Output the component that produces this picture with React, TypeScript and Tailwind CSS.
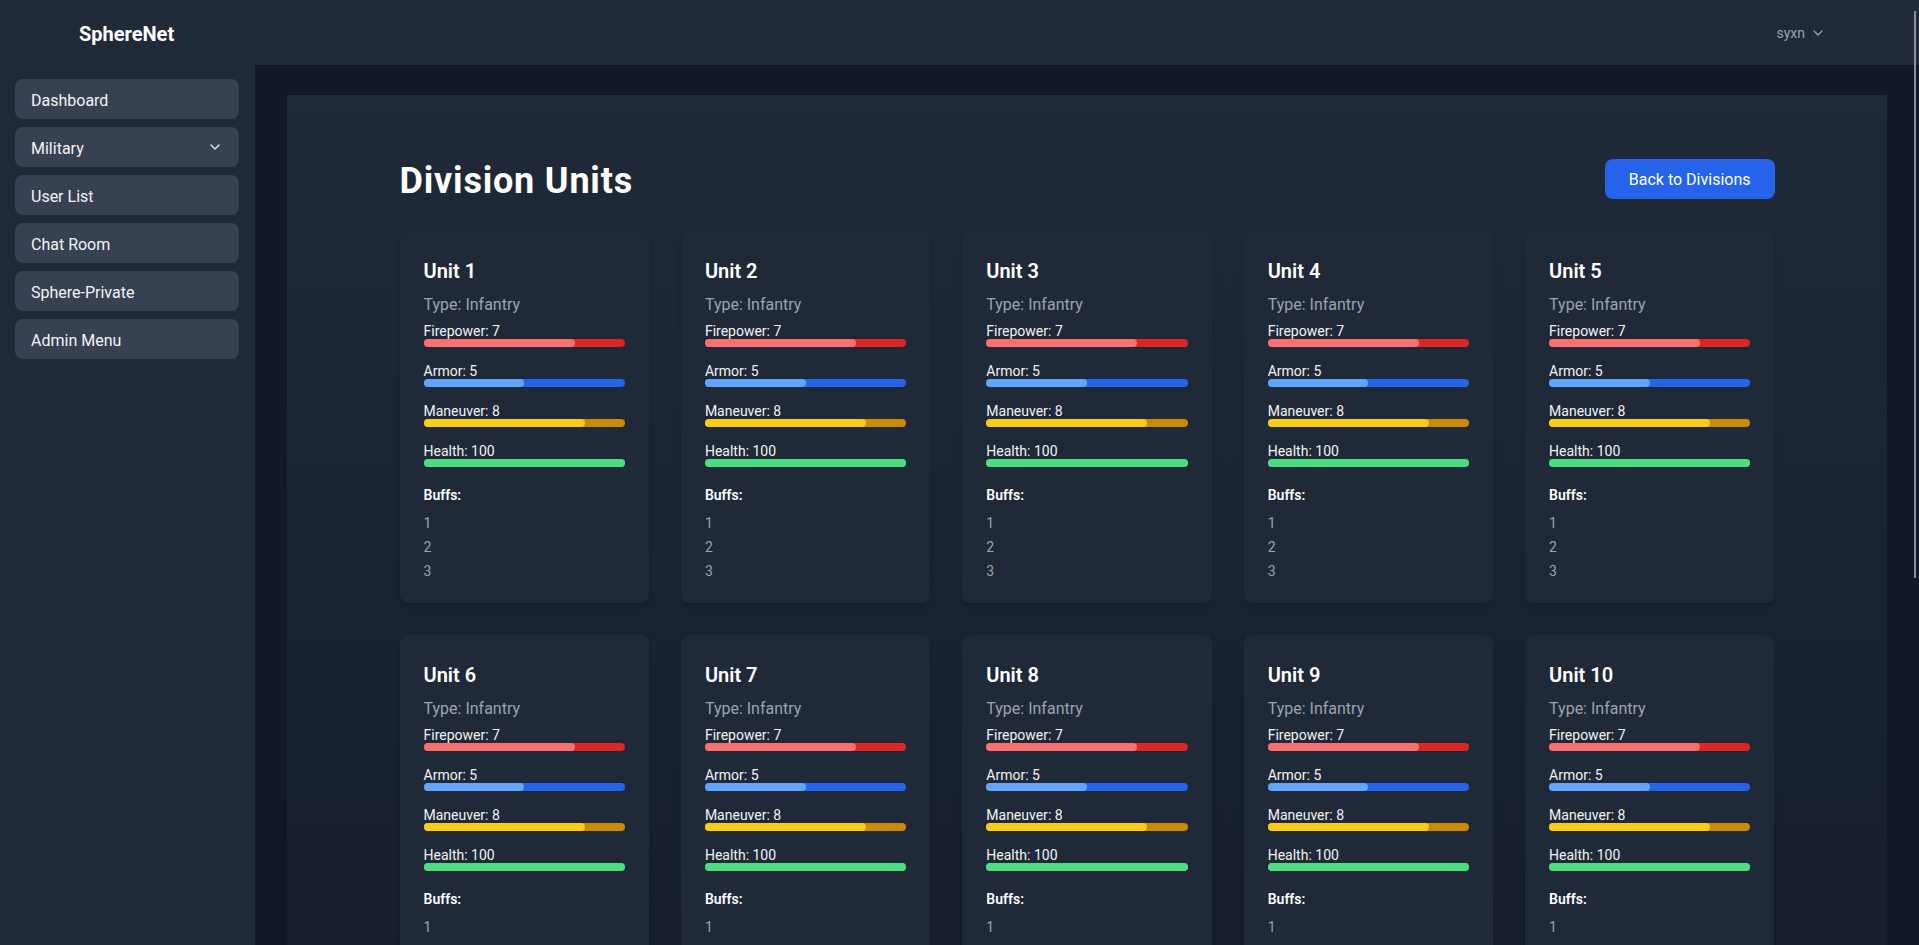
import React from 'react';
import { ChevronDown } from 'lucide-react';

type Unit = {
  id: number;
  name: string;
  type: string;
  firepower: number;
  armor: number;
  maneuver: number;
  health: number;
  buffs: string[];
};

const units: Unit[] = Array.from({ length: 15 }, (_, i) => ({
  id: i + 1,
  name: `Unit ${i + 1}`,
  type: 'Infantry',
  firepower: 7,
  armor: 5,
  maneuver: 8,
  health: 100,
  buffs: ['1', '2', '3'],
}));

const navItems = ['Dashboard', 'Military', 'User List', 'Chat Room', 'Sphere-Private', 'Admin Menu'];

function StatBar({ label, value, fill, track, percent }: { label: string; value: number; fill: string; track: string; percent: number }) {
  return (
    <div className="mb-3">
      <div className="h-5 text-sm leading-6 text-gray-100">
        {label}: {value}
      </div>
      <div className={`h-2 w-full rounded-full ${track}`}>
        <div className={`h-2 rounded-full ${fill}`} style={{ width: `${percent}%` }} />
      </div>
    </div>
  );
}

function UnitCard({ unit }: { unit: Unit }) {
  return (
    <div className="bg-[#1f2937] rounded-lg shadow-md p-6">
      <h3 className="h-7 text-xl leading-8 font-semibold text-white mb-2">{unit.name}</h3>
      <p className="h-6 text-base leading-7 text-[#9ca3af] mb-1">Type: {unit.type}</p>
      <StatBar label="Firepower" value={unit.firepower} fill="bg-[#f87171]" track="bg-[#dc2626]" percent={75} />
      <StatBar label="Armor" value={unit.armor} fill="bg-[#60a5fa]" track="bg-[#2563eb]" percent={50} />
      <StatBar label="Maneuver" value={unit.maneuver} fill="bg-[#facc15]" track="bg-[#ca8a04]" percent={80} />
      <StatBar label="Health" value={unit.health} fill="bg-[#4ade80]" track="bg-[#16a34a]" percent={unit.health} />
      <div className="mt-4">
        <h4 className="h-5 text-sm leading-6 font-semibold text-white">Buffs:</h4>
        <ul className="mt-2 space-y-1">
          {unit.buffs.map((b) => (
            <li key={b} className="h-5 text-sm leading-6 text-[#9ca3af]">
              {b}
            </li>
          ))}
        </ul>
      </div>
    </div>
  );
}

export default function App() {
  return (
    <div className="relative h-screen overflow-hidden bg-[#111827] flex flex-col font-['Roboto','Segoe_UI',sans-serif]">
      <header className="h-[65px] shrink-0 bg-[#212a39] shadow-md flex items-center justify-between pl-[79px] pr-[93px]">
        <span className="pt-[2px] text-xl font-bold text-white">SphereNet</span>
        <button className="flex items-center gap-[5px] text-sm text-[#9ca3af]">
          syxn
          <ChevronDown className="h-4 w-4" />
        </button>
      </header>

      <div className="flex flex-1 min-h-0">
        <aside className="w-[255px] shrink-0 bg-[#1f2937] pt-[14px] pl-[15px] pr-4 flex flex-col gap-2">
          {navItems.map((item) => (
            <div
              key={item}
              className="h-10 rounded-lg bg-[#374151] px-4 flex items-center justify-between text-base text-gray-100"
            >
              <span className="pt-1">{item}</span>
              {item === 'Military' && <ChevronDown className="h-4 w-4 text-gray-200" />}
            </div>
          ))}
        </aside>

        <main className="flex-1 bg-[#111827] pt-[30px] px-8">
          <section className="bg-linear-to-b from-[#1f2937] to-[#111827] pt-16 pb-[134px]">
            <div className="w-[1375px] mx-auto">
              <div className="flex items-center justify-between mb-8">
                <h1 className="h-10 text-4xl leading-[44px] font-bold tracking-[0.8px] text-white">Division Units</h1>
                <button className="h-10 px-6 pt-[2px] rounded-lg bg-[#2563eb] text-base text-white">Back to Divisions</button>
              </div>
              <div className="grid grid-cols-5 gap-8">
                {units.map((u) => (
                  <UnitCard key={u.id} unit={u} />
                ))}
              </div>
            </div>
          </section>
        </main>
      </div>

      <div className="absolute right-[3px] top-[11px] w-[2px] h-[567px] bg-[#8b8e94]" />
    </div>
  );
}
